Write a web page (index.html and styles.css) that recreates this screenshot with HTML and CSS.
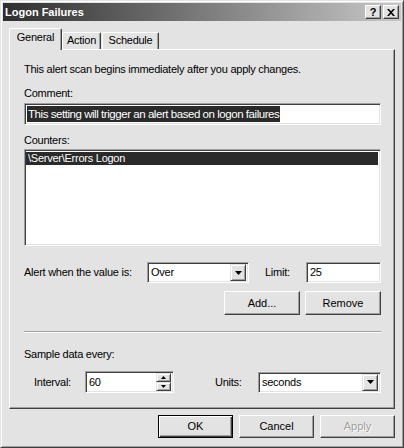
FILE: index.html
```html
<!DOCTYPE html>
<html>
<head>
<meta charset="utf-8">
<link rel="stylesheet" href="styles.css">
</head>
<body>
<div class="window">
  <div class="titlebar">
    <span class="title">Logon Failures</span>
    <div class="caption-buttons">
      <span class="cbtn help">?</span>
      <span class="cbtn close"><svg width="8" height="7" viewBox="0 0 8 7"><path d="M0 0h2l2 2.2 2-2.2h2l-3 3.5 3 3.5h-2l-2-2.2-2 2.2h-2l3-3.5z" fill="#000"/></svg></span>
    </div>
  </div>
  <div class="body">
    <div class="tabs">
      <div class="tab active tab-general">General</div>
      <div class="tab tab-action">Action</div>
      <div class="tab tab-schedule">Schedule</div>
    </div>
    <div class="panel">
      <div class="intro">This alert scan begins immediately after you apply changes.</div>
      <div class="label comment-label">Comment:</div>
      <div class="edit comment-box"><span class="sel">This setting will trigger an alert based on logon failures</span></div>
      <div class="label counters-label">Counters:</div>
      <div class="edit listbox">
        <div class="list-item selected">\Server\Errors Logon</div>
      </div>
      <div class="row alert-row">
        <span class="alert-label">Alert when the value is:</span>
        <div class="edit combo combo-over"><span class="combo-text">Over</span><span class="drop"><svg width="7" height="4" viewBox="0 0 7 4"><path d="M0 0h7l-3.5 4z" fill="#000"/></svg></span></div>
        <span class="limit-label">Limit:</span>
        <div class="edit limit-box"><span class="field-text">25</span></div>
      </div>
      <div class="row btn-row">
        <button class="btn">Add...</button>
        <button class="btn">Remove</button>
      </div>
      <div class="separator"></div>
      <div class="label sample-label">Sample data every:</div>
      <div class="row interval-row">
        <span class="interval-label">Interval:</span>
        <div class="edit interval-box"><span class="field-text">60</span>
          <span class="spin">
            <span class="spin-btn"><svg width="5" height="3" viewBox="0 0 5 3"><path d="M2.5 0l2.5 3h-5z" fill="#000"/></svg></span>
            <span class="spin-btn"><svg width="5" height="3" viewBox="0 0 5 3"><path d="M0 0h5l-2.5 3z" fill="#000"/></svg></span>
          </span>
        </div>
        <span class="units-label">Units:</span>
        <div class="edit combo units-box"><span class="combo-text">seconds</span><span class="drop"><svg width="7" height="4" viewBox="0 0 7 4"><path d="M0 0h7l-3.5 4z" fill="#000"/></svg></span></div>
      </div>
    </div>
    <div class="footer">
      <button class="btn default">OK</button>
      <button class="btn">Cancel</button>
      <button class="btn disabled">Apply</button>
    </div>
  </div>
</div>
</body>
</html>
```

FILE: styles.css
```css
* { box-sizing: border-box; }
html, body { margin: 0; padding: 0; background: #e3e3e3; }
body {
  font-family: "Liberation Sans", Arial, sans-serif;
  font-size: 11px;
  line-height: 13px;
  letter-spacing: -0.25px;
  color: #000;
}
.window {
  width: 404px;
  height: 448px;
  border: 1px solid;
  border-color: #e3e3e3 #404040 #404040 #e3e3e3;
  box-shadow: inset 1px 1px #fff, inset -1px -1px #a0a0a0;
  padding: 2px;
  background: #e3e3e3;
  display: flex;
  flex-direction: column;
}
.titlebar {
  height: 18px;
  flex: none;
  display: flex;
  align-items: center;
  padding: 0 2px 0 2px;
  background: linear-gradient(to right, #2e2e2e, #c8c8c8);
}
.title { color: #fff; font-weight: bold; font-size: 11px; letter-spacing: 0; }
.caption-buttons { margin-left: auto; display: flex; gap: 2px; }
.cbtn {
  width: 16px; height: 14px;
  display: flex; align-items: center; justify-content: center;
  background: #e3e3e3;
  border: 1px solid; border-color: #fff #404040 #404040 #fff;
  box-shadow: inset -1px -1px #a0a0a0;
  font-weight: bold; font-size: 11px; line-height: 11px;
  letter-spacing: 0;
}
.body { flex: 1; padding: 7px 6px 0 6px; display: flex; flex-direction: column; }
.tabs { display: flex; align-items: flex-end; height: 21px; }
.tab {
  height: 17px;
  display: flex; justify-content: center;
  border-top: 1px solid #fff;
  border-left: 1px solid #fff;
  border-right: 1px solid #404040;
  border-radius: 2px 2px 0 0;
  box-shadow: inset -1px 0 #a0a0a0;
  background: #e3e3e3;
  padding-top: 1px;
}
.tab.active {
  height: 22px;
  margin-bottom: -1px;
  position: relative;
  z-index: 1;
  padding-top: 2px;
}
.tab-general { width: 53px; }
.tab-action { width: 39px; }
.tab-schedule { width: 57px; margin-left: 1px; }
.panel {
  width: 386px;
  height: 360px;
  border: 1px solid;
  border-color: #fff #404040 #404040 #fff;
  box-shadow: inset -1px -1px #a0a0a0;
  padding: 13px 13px 0 14px;
}
.comment-label { margin-top: 11px; }
.edit {
  background: #fff;
  border: 1px solid;
  border-color: #a0a0a0 #fff #fff #a0a0a0;
  box-shadow: inset 1px 1px #404040, inset -1px -1px #e3e3e3;
}
.comment-box { margin-top: 3px; height: 22px; padding: 2px 0 0 2px; }
.sel {
  display: inline-block;
  background: #2a2a2a; color: #fff;
  height: 16px; line-height: 16px;
  padding: 0 1px;
  font-size: 11.5px;
  letter-spacing: -0.45px;
}
.counters-label { margin-top: 9px; }
.listbox { margin-top: 2px; height: 97px; padding: 2px 2px 2px 1px; }
.list-item { height: 13px; padding-left: 2px; line-height: 13px; }
.list-item.selected { background: #2a2a2a; color: #fff; }
.row { display: flex; align-items: center; }
.alert-row { margin-top: 16px; height: 21px; }
.alert-label { width: 123px; }
.combo { display: flex; align-items: center; height: 21px; padding: 2px; }
.combo-over { width: 102px; }
.combo-text { flex: 1; padding-left: 1px; }
.drop {
  width: 16px; height: 17px;
  display: flex; align-items: center; justify-content: center;
  background: #e3e3e3;
  border: 1px solid; border-color: #e3e3e3 #404040 #404040 #e3e3e3;
  box-shadow: inset 1px 1px #fff, inset -1px -1px #a0a0a0;
}
.limit-label { margin-left: 16px; width: 41px; }
.limit-box { width: 75px; height: 21px; display: flex; align-items: center; padding-left: 3px; }
.btn-row { margin-top: 8px; justify-content: flex-end; gap: 5px; }
.btn-row .btn { width: 76px; height: 24px; }
.btn {
  width: 75px; height: 23px;
  font: inherit; color: #000;
  background: #e3e3e3;
  border: 1px solid; border-color: #fff #404040 #404040 #fff;
  box-shadow: inset -1px -1px #a0a0a0;
  padding: 0;
}
.btn.default {
  border-color: #000;
  box-shadow: inset 1px 1px #fff, inset -1px -1px #404040, inset -2px -2px #a0a0a0;
}
.btn.disabled { color: #a0a0a0; text-shadow: 1px 1px #fff; }
.separator { margin-top: 16px; height: 2px; border-top: 1px solid #a0a0a0; border-bottom: 1px solid #fff; }
.sample-label { margin-top: 15px; }
.interval-row { margin-top: 10px; height: 22px; }
.interval-label { margin-left: 10px; width: 51px; }
.interval-box { width: 89px; height: 22px; display: flex; align-items: center; padding: 2px 2px 2px 3px; }
.field-text { flex: 1; }
.spin { display: flex; flex-direction: column; width: 15px; height: 18px; }
.spin-btn {
  flex: 1;
  display: flex; align-items: center; justify-content: center;
  background: #e3e3e3;
  border: 1px solid; border-color: #e3e3e3 #404040 #404040 #e3e3e3;
  box-shadow: inset 1px 1px #fff, inset -1px -1px #a0a0a0;
}
.units-label { margin-left: 41px; width: 43px; }
.units-box { width: 123px; height: 21px; }
.footer { margin-top: 6px; display: flex; justify-content: flex-end; gap: 6px; }
```
